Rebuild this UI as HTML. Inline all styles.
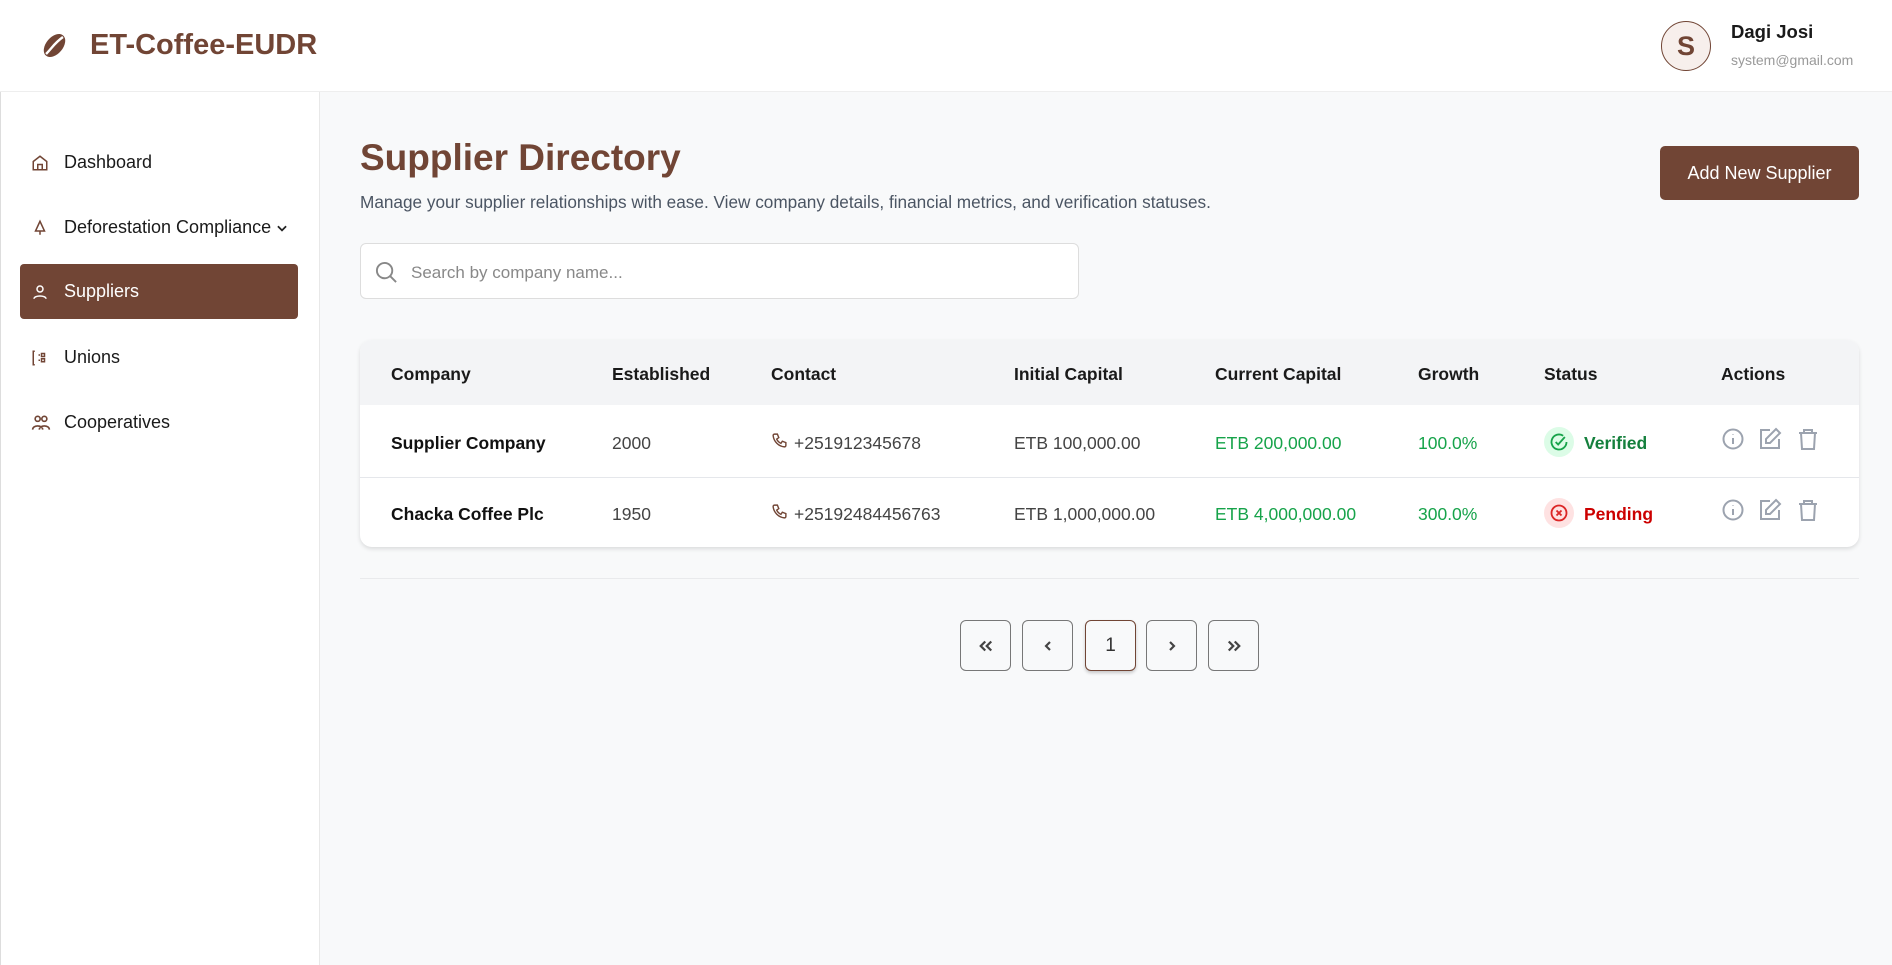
<!DOCTYPE html>
<html><head><meta charset="utf-8"><style>
*{box-sizing:border-box;margin:0;padding:0}
body{width:1892px;height:965px;overflow:hidden;font-family:"Liberation Sans",sans-serif;background:#f8f9fa;position:relative;color:#111}
.abs{position:absolute}
header{position:absolute;left:0;top:0;width:1892px;height:92px;background:#fff;border-bottom:1px solid #eee}
aside{position:absolute;left:0;top:92px;width:320px;height:873px;background:#fff;border-right:1px solid #e8e8e8;border-left:1px solid #ddd}
.nav{position:absolute;left:20px;width:278px;height:55px;display:flex;align-items:center;font-size:18px;color:#1a1a1a}
.nav svg{position:absolute;left:11px}
.nav span{position:absolute;left:44px}
.nav.act{background:#714535;color:#fff;border-radius:4px}
.th{position:absolute;top:364px;font-size:17.5px;font-weight:bold;color:#1a1a1a}
.c{position:absolute;font-size:17.5px;color:#444}
.g{color:#16a34a}
.pb{position:absolute;top:620px;width:51px;height:51px;border:1px solid #777;border-radius:6px;background:#f8f9fa;display:flex;align-items:center;justify-content:center;font-size:19px;color:#333}
</style></head><body>
<header>
<svg class="abs" style="left:40px;top:31px" width="29" height="29" viewBox="0 0 24 24"><ellipse cx="12" cy="12" rx="7" ry="11" transform="rotate(40 12 12)" fill="#714535"/><path d="M5 19 C10 14 12 10 19 5" stroke="#fff" stroke-width="2" fill="none"/></svg>
<div class="abs" style="left:90px;top:29px;font-size:29px;font-weight:bold;color:#714535">ET-Coffee-EUDR</div>
<div class="abs" style="left:1661px;top:21px;width:50px;height:50px;border-radius:50%;border:1.5px solid #714535;background:#f7efec;color:#714535;font-size:27px;font-weight:bold;display:flex;align-items:center;justify-content:center">S</div>
<div class="abs" style="left:1731px;top:21px;font-size:18.5px;font-weight:bold;color:#1a1a1a">Dagi Josi</div>
<div class="abs" style="left:1731px;top:52px;font-size:14px;color:#999">system@gmail.com</div>
</header>
<aside></aside>
<div class="nav" style="top:135px"><svg width="18" height="18" viewBox="0 0 24 24" fill="none" stroke="#714535" stroke-width="2"><path d="M3 10l9-7 9 7v11H3z M9 21v-7h6v7"/></svg><span>Dashboard</span></div>
<div class="nav" style="top:200px"><svg width="18" height="18" viewBox="0 0 24 24" fill="none" stroke="#714535" stroke-width="2"><path d="M12 3l-6 13h12z M12 16v5"/></svg><span>Deforestation Compliance</span><svg style="left:255px" width="14" height="14" viewBox="0 0 24 24" fill="none" stroke="#222" stroke-width="3"><path d="M5 9l7 7 7-7"/></svg></div>
<div class="nav act" style="top:264px"><svg width="18" height="18" viewBox="0 0 24 24" fill="none" stroke="#fff" stroke-width="2"><circle cx="12" cy="8" r="4"/><path d="M4 21c0-5 16-5 16 0"/></svg><span>Suppliers</span></div>
<div class="nav" style="top:330px"><svg width="18" height="18" viewBox="0 0 24 24" fill="none" stroke="#714535" stroke-width="2"><path d="M5 3H3v18h2M10 8h2M10 15h2"/><rect x="14" y="6" width="4" height="4"/><rect x="14" y="13" width="4" height="4"/></svg><span>Unions</span></div>
<div class="nav" style="top:395px"><svg width="20" height="20" viewBox="0 0 24 24" fill="none" stroke="#714535" stroke-width="2"><circle cx="8" cy="7" r="3"/><circle cx="16" cy="7" r="3"/><path d="M2 20c0-6 12-6 12 0M10 20c0-6 12-6 12 0"/></svg><span>Cooperatives</span></div>

<div class="abs" style="left:360px;top:137px;font-size:37px;font-weight:bold;color:#714535">Supplier Directory</div>
<div class="abs" style="left:360px;top:192px;font-size:17.2px;color:#4b5563">Manage your supplier relationships with ease. View company details, financial metrics, and verification statuses.</div>
<div class="abs" style="left:1660px;top:146px;width:199px;height:54px;background:#714535;border-radius:5px;color:#fff;font-size:18px;display:flex;align-items:center;justify-content:center">Add New Supplier</div>
<div class="abs" style="left:360px;top:243px;width:719px;height:56px;background:#fff;border:1px solid #ddd;border-radius:6px"></div>
<svg class="abs" style="left:375px;top:261px" width="23" height="23" viewBox="0 0 24 24" fill="none" stroke="#888" stroke-width="2"><circle cx="10" cy="10" r="8"/><path d="M16 16l6 6"/></svg>
<div class="abs" style="left:411px;top:263px;font-size:17px;color:#888">Search by company name...</div>

<div class="abs" style="left:360px;top:340px;width:1499px;height:207px;background:#fff;border-radius:12px;box-shadow:0 2px 4px rgba(0,0,0,.12);overflow:hidden">
<div style="height:65px;background:#f3f4f6"></div>
<div style="height:1px;background:#e5e7eb;margin-top:72px"></div>
</div>
<div class="th" style="left:391px">Company</div><div class="th" style="left:612px">Established</div><div class="th" style="left:771px">Contact</div><div class="th" style="left:1014px">Initial Capital</div><div class="th" style="left:1215px">Current Capital</div><div class="th" style="left:1418px">Growth</div><div class="th" style="left:1544px">Status</div><div class="th" style="left:1721px">Actions</div>

<div class="c" style="left:391px;top:433px;font-weight:bold;color:#111">Supplier Company</div>
<div class="c" style="left:612px;top:433px">2000</div>
<svg class="abs" style="left:771px;top:432px" width="17" height="17" viewBox="0 0 24 24" fill="none" stroke="#714535" stroke-width="2"><path d="M5 3h4l2 5-3 2a12 12 0 006 6l2-3 5 2v4a2 2 0 01-2 2A18 18 0 013 5a2 2 0 012-2z"/></svg>
<div class="c" style="left:794px;top:433px">+251912345678</div>
<div class="c" style="left:1014px;top:433px">ETB 100,000.00</div>
<div class="c g" style="left:1215px;top:433px">ETB 200,000.00</div>
<div class="c g" style="left:1418px;top:433px">100.0%</div>
<div class="abs" style="left:1544px;top:427px;width:30px;height:30px;border-radius:50%;background:#dcfce7"></div>
<svg class="abs" style="left:1549px;top:432px" width="20" height="20" viewBox="0 0 24 24" fill="none" stroke="#16a34a" stroke-width="2.2"><path d="M21 12a9 9 0 11-4-7.5"/><path d="M8 12l3 3 8-9"/></svg>
<div class="c" style="left:1584px;top:433px;color:#15803d;font-weight:bold">Verified</div>

<div class="c" style="left:391px;top:504px;font-weight:bold;color:#111">Chacka Coffee Plc</div>
<div class="c" style="left:612px;top:504px">1950</div>
<svg class="abs" style="left:771px;top:503px" width="17" height="17" viewBox="0 0 24 24" fill="none" stroke="#714535" stroke-width="2"><path d="M5 3h4l2 5-3 2a12 12 0 006 6l2-3 5 2v4a2 2 0 01-2 2A18 18 0 013 5a2 2 0 012-2z"/></svg>
<div class="c" style="left:794px;top:504px">+25192484456763</div>
<div class="c" style="left:1014px;top:504px">ETB 1,000,000.00</div>
<div class="c g" style="left:1215px;top:504px">ETB 4,000,000.00</div>
<div class="c g" style="left:1418px;top:504px">300.0%</div>
<div class="abs" style="left:1544px;top:498px;width:30px;height:30px;border-radius:50%;background:#fee2e2"></div>
<svg class="abs" style="left:1549px;top:503px" width="20" height="20" viewBox="0 0 24 24" fill="none" stroke="#dc2626" stroke-width="2.2"><circle cx="12" cy="12" r="9"/><path d="M9 9l6 6M15 9l-6 6"/></svg>
<div class="c" style="left:1584px;top:504px;color:#c00;font-weight:bold">Pending</div>

<svg width="0" height="0" style="position:absolute"><defs>
<g id="ac" fill="none" stroke="#9ca3af" stroke-width="2"><circle cx="12" cy="12" r="9.5"/><path d="M12 11v6M12 7.5v.5"/><g transform="translate(37 0)"><path d="M12 3H3v18h18v-9"/><path d="M18 2l4 4-10 10H8v-4z"/></g><g transform="translate(75 0)"><path d="M3 6h18M8 6V3h8v3M5 6l1 16h12l1-16"/></g></g></defs></svg>
<svg class="abs" style="left:1721px;top:427px" width="110" height="24" viewBox="0 0 110 24"><use href="#ac"/></svg>
<svg class="abs" style="left:1721px;top:498px" width="110" height="24" viewBox="0 0 110 24"><use href="#ac"/></svg>

<div class="abs" style="left:360px;top:578px;width:1499px;height:1px;background:#e9eaec"></div>
<div class="pb" style="left:960px"><svg width="18" height="18" viewBox="0 0 24 24" fill="none" stroke="#444" stroke-width="3"><path d="M11 6l-6 6 6 6M19 6l-6 6 6 6"/></svg></div>
<div class="pb" style="left:1022px"><svg width="16" height="16" viewBox="0 0 24 24" fill="none" stroke="#444" stroke-width="3.2"><path d="M15 6l-6 6 6 6"/></svg></div>
<div class="pb" style="left:1085px;border-color:#714535;box-shadow:0 2px 3px rgba(0,0,0,.2)">1</div>
<div class="pb" style="left:1146px"><svg width="16" height="16" viewBox="0 0 24 24" fill="none" stroke="#444" stroke-width="3.2"><path d="M9 6l6 6-6 6"/></svg></div>
<div class="pb" style="left:1208px"><svg width="18" height="18" viewBox="0 0 24 24" fill="none" stroke="#444" stroke-width="3"><path d="M5 6l6 6-6 6M13 6l6 6-6 6"/></svg></div>
</body></html>
